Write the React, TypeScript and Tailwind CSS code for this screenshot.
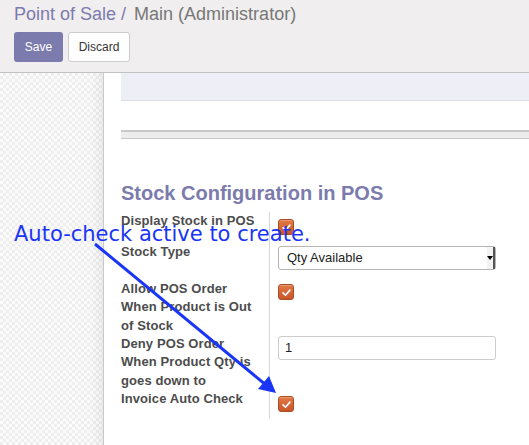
import React from 'react'

function Check() {
  return (
    <span className="flex h-4 w-4 items-center justify-center rounded-[3px] border border-[#a94a1f] bg-[linear-gradient(#e27a45,#c9562a)] shadow-[inset_0_1px_0_rgba(255,255,255,0.25)]">
      <svg viewBox="0 0 16 16" className="h-[11px] w-[11px]">
        <path d="M3 8.5 6.5 12 13 4.5" fill="none" stroke="#fff" strokeWidth="2.4" strokeLinecap="round" strokeLinejoin="round" />
      </svg>
    </span>
  )
}

const label = "font-bold text-[13px] leading-[18.5px] tracking-[0.1px] text-[#4c4c4c]"

export default function App() {
  return (
    <div className="relative flex h-[445px] w-[529px] flex-col overflow-hidden bg-white font-['Liberation_Sans',Arial,sans-serif]">
      {/* control panel */}
      <div className="h-[73px] shrink-0 border-b border-[#c2c2c2] bg-[#f0eeee] px-[14px]">
        <div className="pt-[2px] text-[18px] leading-[24px]">
          <span className="text-[#7c7bad]">Point of Sale</span>
          <span className="text-[#7c7bad]"> / </span>
          <span className="ml-[3px] text-[#777]">Main (Administrator)</span>
        </div>
        <div className="mt-[6px] flex gap-[5px]">
          <button className="h-[30px] w-[49px] rounded-[3px] bg-[#7c7bad] text-[12px] text-white">Save</button>
          <button className="h-[30px] w-[62px] rounded-[3px] border border-[#ccc] bg-white text-[12px] text-[#333]">Discard</button>
        </div>
      </div>

      <div className="flex flex-1">
        {/* left background */}
        <div className="relative w-[104px] shrink-0 border-r border-[#c8c8d0] bg-[repeating-conic-gradient(#eeeeee_0_25%,#fbfbfb_0_50%)] bg-[length:6px_6px]">
          <div className="absolute inset-y-0 right-0 w-[12px] bg-[linear-gradient(90deg,rgba(0,0,0,0),rgba(0,0,0,0.05))]" />
        </div>

        {/* sheet */}
        <div className="flex-1 pl-[17px]">
          <div className="h-[28px] border-b border-[#dcdce4] bg-[#eeeef7]" />
          <div className="mt-[29px] h-[9px] border-t-2 border-b border-[#c8c8c8] bg-[#ececec]" />

          <h2 className="mt-[42px] text-[20px] font-bold leading-[24px] text-[#7c7bad]">
            Stock Configuration in POS
          </h2>

          <div className="mt-[7px] grid grid-cols-[149px_1fr]">
            <div className="border-r border-[#d6d6d6]">
              <div className={`h-[31px] ${label}`}>Display Stock in POS</div>
              <div className={`h-[36.5px] ${label}`}>Stock Type</div>
              <div className={`h-[55px] ${label}`}>
                Allow POS Order
                <br />
                When Product is Out
                <br />
                of Stock
              </div>
              <div className={`h-[55px] ${label}`}>
                Deny POS Order
                <br />
                When Product Qty is
                <br />
                goes down to
              </div>
              <div className={`h-[29px] ${label}`}>Invoice Auto Check</div>
            </div>

            <div className="pl-[8px]">
              <div className="h-[31px] pt-[7px]">
                <Check />
              </div>
              <div className="h-[36.5px] pt-[2.5px]">
                <div className="flex h-[24px] w-[218px] items-center justify-between rounded-[3px] border border-[#b5b5b5] bg-white pl-[8px] text-[13px] text-[#222]">
                  <span>Qty Available</span>
                  <span className="flex h-full w-[8px] items-center justify-center border-r-2 border-[#555] bg-[#f2f2f2]">
                    <span className="h-0 w-0 border-x-[3px] border-t-[4px] border-x-transparent border-t-black" />
                  </span>
                </div>
              </div>
              <div className="h-[55px] pt-[4.5px]">
                <Check />
              </div>
              <div className="h-[55px] pt-[1px]">
                <div className="flex h-[24px] w-[218px] items-center rounded-[3px] border border-[#ccc] bg-white pl-[6px] text-[13px] text-[#222]">
                  1
                </div>
              </div>
              <div className="h-[29px] pt-[6.5px]">
                <Check />
              </div>
            </div>
          </div>
        </div>
      </div>

      {/* annotation */}
      <div className="absolute left-[14px] top-[221px] font-['DejaVu_Sans',sans-serif] text-[21px] leading-[26px] text-[#1a35f5]">
        Auto-check active to create.
      </div>
      <svg className="absolute left-0 top-0" width="529" height="445" viewBox="0 0 529 445">
        <line x1="95" y1="244" x2="266" y2="385" stroke="#1a35f5" strokeWidth="3" />
        <polygon points="276,393 258,389 269,376" fill="#1a35f5" />
      </svg>
    </div>
  )
}
